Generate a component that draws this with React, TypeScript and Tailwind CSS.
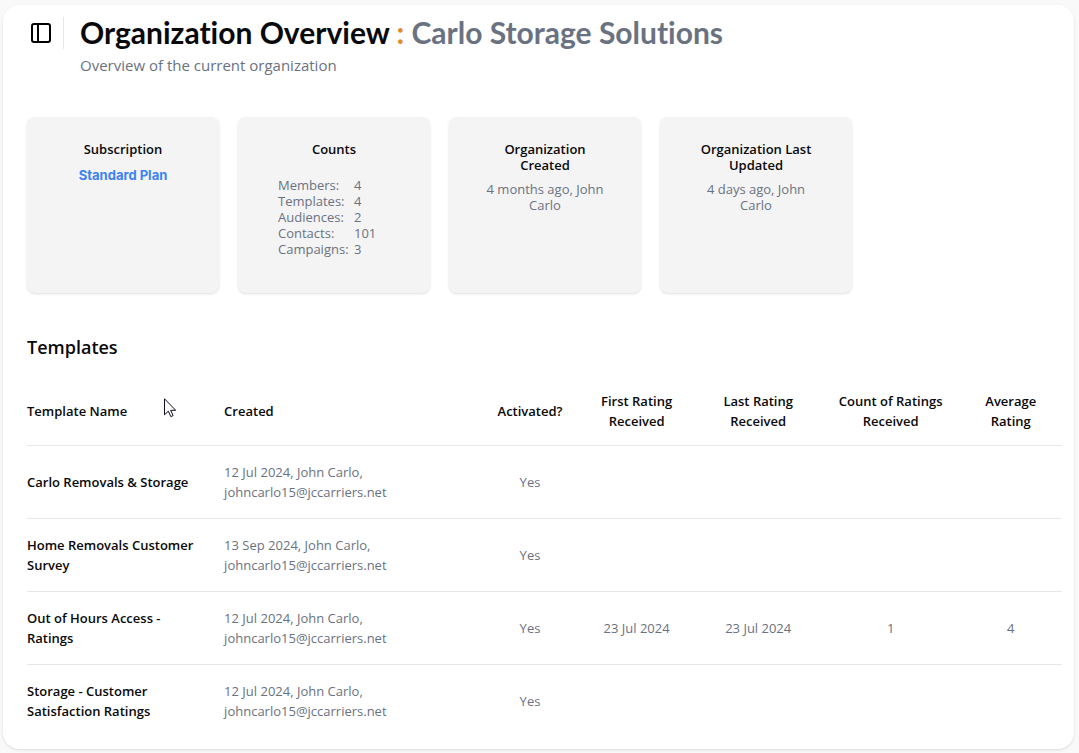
import type { ReactNode } from "react";
import clsx from "clsx";

interface ITemplate {
  name: string;
  created: string;
  email: string;
  activated: boolean;
  firstRating?: string;
  lastRating?: string;
  ratingsCount?: number;
  averageRating?: number;
}

const email = "johncarlo15@jccarriers.net";

const templates: ITemplate[] = [
  {
    name: "Carlo Removals & Storage",
    created: "12 Jul 2024, John Carlo,",
    email,
    activated: true,
  },
  {
    name: "Home Removals Customer Survey",
    created: "13 Sep 2024, John Carlo,",
    email,
    activated: true,
  },
  {
    name: "Out of Hours Access - Ratings",
    created: "12 Jul 2024, John Carlo,",
    email,
    activated: true,
    firstRating: "23 Jul 2024",
    lastRating: "23 Jul 2024",
    ratingsCount: 1,
    averageRating: 4,
  },
  {
    name: "Storage - Customer Satisfaction Ratings",
    created: "12 Jul 2024, John Carlo,",
    email,
    activated: true,
  },
];

const counts = [
  { label: "Members:", value: 4 },
  { label: "Templates:", value: 4 },
  { label: "Audiences:", value: 2 },
  { label: "Contacts:", value: 101 },
  { label: "Campaigns:", value: 3 },
];

const columns = [
  { title: "Template Name", width: "w-[17.5%]" },
  { title: "Created", width: "w-[26.4%]" },
  { title: "Activated?", width: "w-[9.4%]" },
  { title: "First Rating Received", width: "w-[11.2%]" },
  { title: "Last Rating Received", width: "w-[12.3%]" },
  { title: "Count of Ratings Received", width: "w-[13.3%]" },
  { title: "Average Rating", width: "w-[9.9%]" },
];

function InfoCard({ title, children }: { title: string; children: ReactNode }) {
  return (
    <article className="min-h-44 w-48 rounded-lg bg-[#f4f4f4] px-8 pt-6 pb-8 text-center text-[13px] leading-4 text-gray-500 shadow-sm">
      <h3 className="mb-2 font-semibold text-zinc-950">{title}</h3>
      {children}
    </article>
  );
}

function SidebarToggle() {
  return (
    <button type="button" aria-label="Toggle sidebar" className="text-black">
      <svg
        className="size-6"
        viewBox="0 0 24 24"
        fill="none"
        stroke="currentColor"
        strokeWidth="2"
        strokeLinejoin="round"
      >
        <rect x="3" y="3" width="18" height="18" rx="2" />
        <path d="M9 3v18" />
      </svg>
    </button>
  );
}

function Pointer() {
  return (
    <svg
      className="pointer-events-none absolute top-[393px] left-[161px] h-5 w-3"
      viewBox="0 0 12 20"
      fill="#fff"
      stroke="#0b0b2b"
      aria-hidden="true"
    >
      <path d="M.5.8v16l3.8-3.6 2.5 5.4 2.3-1-2.4-5.3h5z" />
    </svg>
  );
}

function TemplatesTable() {
  return (
    <table className="w-full table-fixed text-[13px] leading-5">
      <thead>
        <tr className="border-b border-gray-200">
          {columns.map(({ title, width }, i) => (
            <th
              key={title}
              className={clsx(
                "py-3.5 font-semibold text-zinc-950",
                width,
                i === 0 && "pr-3 text-left",
                i === 1 && "px-4 text-left",
                i === 2 && "text-center",
                i > 2 && "px-3 text-center",
              )}
            >
              {title}
            </th>
          ))}
        </tr>
      </thead>
      <tbody className="text-center text-gray-500">
        {templates.map((t) => (
          <tr key={t.name} className="border-b border-gray-200 last:border-b-0">
            <td className="py-4 pr-2 text-left font-semibold text-zinc-950">
              {t.name}
            </td>
            <td className="px-4 py-4 text-left">
              {t.created}
              <br />
              {t.email}
            </td>
            <td>{t.activated ? "Yes" : "No"}</td>
            <td>{t.firstRating}</td>
            <td>{t.lastRating}</td>
            <td>{t.ratingsCount}</td>
            <td>{t.averageRating}</td>
          </tr>
        ))}
      </tbody>
    </table>
  );
}

export default function App() {
  return (
    <div className="min-h-screen bg-[#f9f9f9] pt-[5px] pr-[5px] pb-1 pl-[3px] font-['Open_Sans','Noto_Sans',sans-serif]">
      <main className="relative rounded-2xl bg-white pt-3 pr-3 pb-3 pl-6 shadow-sm">
        <header className="flex items-start pl-0.5">
          <div className="flex h-8 items-center border-r border-gray-200 pr-2.5">
            <SidebarToggle />
          </div>
          <div className="ml-4">
            <h1 className="font-[Lato,sans-serif] text-[30px] leading-[30px] font-bold text-zinc-950 [font-variant-ligatures:none]">
              Organization Overview <span className="text-[#e38b2c]">:</span>{" "}
              <span className="text-gray-500">Carlo Storage Solutions</span>
            </h1>
            <p className="mt-1.5 text-[15px] leading-6 text-gray-500">
              Overview of the current organization
            </p>
          </div>
        </header>

        <section className="mt-10 flex flex-wrap gap-[19px]">
          <InfoCard title="Subscription">
            <a
              href="#plan"
              className="block pt-0.5 font-[Inter,sans-serif] font-bold text-[#3b82f6]"
            >
              Standard Plan
            </a>
          </InfoCard>
          <InfoCard title="Counts">
            <dl className="mx-auto mt-5 w-[112px] text-left">
              {counts.map(({ label, value }) => (
                <div key={label} className="flex">
                  <dt className="w-[76px] shrink-0">{label}</dt>
                  <dd>{value}</dd>
                </div>
              ))}
            </dl>
          </InfoCard>
          <InfoCard title="Organization Created">
            <p>4 months ago, John Carlo</p>
          </InfoCard>
          <InfoCard title="Organization Last Updated">
            <p>4 days ago, John Carlo</p>
          </InfoCard>
        </section>

        <section className="mt-10">
          <h2 className="mb-4 text-lg leading-7 font-semibold text-zinc-950">
            Templates
          </h2>
          <TemplatesTable />
        </section>
        <Pointer />
      </main>
    </div>
  );
}
